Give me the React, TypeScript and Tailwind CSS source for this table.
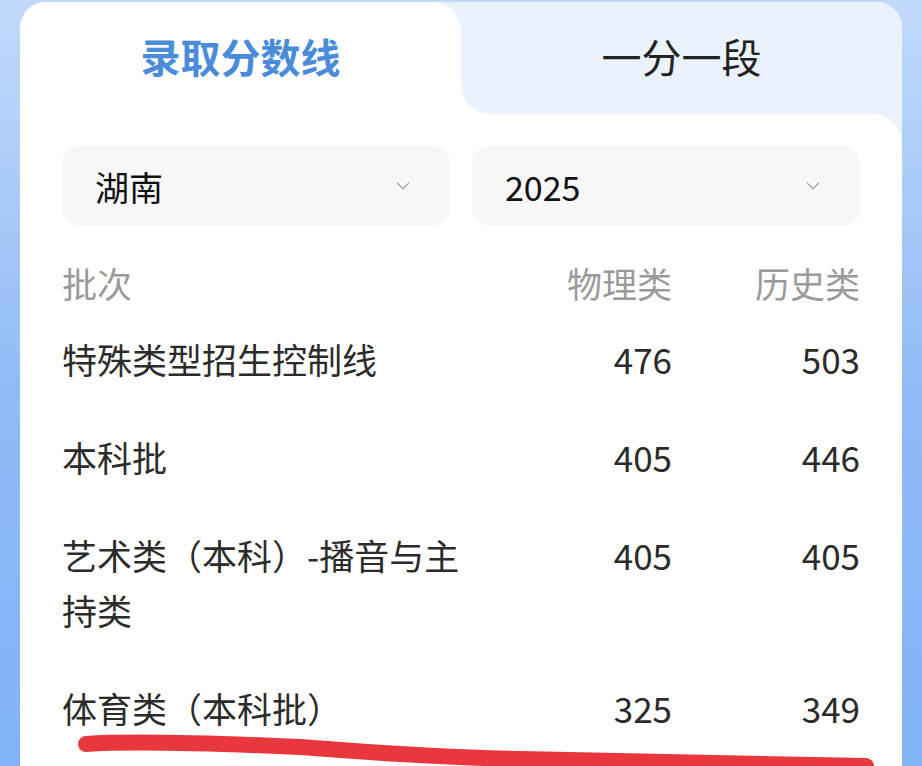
import { ChevronDown } from 'lucide-react'

const rows = [
  { name: '特殊类型招生控制线', physics: '476', history: '503' },
  { name: '本科批', physics: '405', history: '446' },
  { name: '艺术类（本科）-播音与主持类', physics: '405', history: '405' },
  { name: '体育类（本科批）', physics: '325', history: '349' },
]

const font = { fontFamily: '"Noto Sans CJK SC", "Noto Sans", sans-serif' }

function Select({ value }: { value: string }) {
  return (
    <div className="flex h-[80px] items-center justify-between rounded-[18px] bg-[#f7f7f7] pl-[33px] pr-[36px]">
      <span className="text-[34px] text-[#111]">{value}</span>
      <ChevronDown className="h-[22px] w-[22px] text-[#a8a8a8]" strokeWidth={1.4} />
    </div>
  )
}

export default function App() {
  return (
    <div
      className="relative h-[766px] w-[922px] overflow-hidden bg-gradient-to-b from-[#c2dafa] via-[#90bcf6] to-[#80b4f6] px-[20px] pt-[2px]"
      style={font}
    >
      <div className="h-full overflow-hidden rounded-t-[26px] bg-white">
        {/* Tabs */}
        <div className="grid h-[112px] grid-cols-2">
          <div className="bg-[#eaf2fd]">
            <div className="flex h-full items-center justify-center rounded-tr-[30px] bg-white pb-[4px]">
              <span className="text-[40px] font-bold text-[#4a8cda]">录取分数线</span>
            </div>
          </div>
          <div className="bg-white">
            <div className="flex h-full items-center justify-center rounded-bl-[30px] bg-[#eaf2fd] pb-[4px]">
              <span className="text-[40px] text-[#222]">一分一段</span>
            </div>
          </div>
        </div>

        {/* Body */}
        <div className="bg-[#eaf2fd]">
          <div className="h-[700px] rounded-tr-[30px] bg-white px-[42px] pt-[32px]">
            <div className="grid grid-cols-2 gap-[22px]">
              <Select value="湖南" />
              <Select value="2025" />
            </div>

            <div className="mt-[29px] grid grid-cols-[430px_1fr_188px] text-[35px] leading-[55px] text-[#9a9a9a]">
              <span>批次</span>
              <span className="text-right">物理类</span>
              <span className="text-right">历史类</span>
            </div>

            {rows.map((r) => (
              <div
                key={r.name}
                className="grid grid-cols-[430px_1fr_188px] pb-[22px] pt-[21px] text-[35px] leading-[55px] text-[#2b2b2b]"
              >
                <span className="pr-[14px]">{r.name}</span>
                <span className="text-right">{r.physics}</span>
                <span className="text-right">{r.history}</span>
              </div>
            ))}
          </div>
        </div>
      </div>

      {/* hand-drawn red underline */}
      <svg className="absolute left-0 top-[730px]" width="922" height="40" viewBox="0 0 922 40">
        <path
          d="M86 14 C 130 11, 210 13, 300 17 C 360 21, 420 27, 520 29 C 640 31, 760 33, 866 36"
          fill="none"
          stroke="#e8383d"
          strokeWidth="16"
          strokeLinecap="round"
        />
      </svg>
    </div>
  )
}
